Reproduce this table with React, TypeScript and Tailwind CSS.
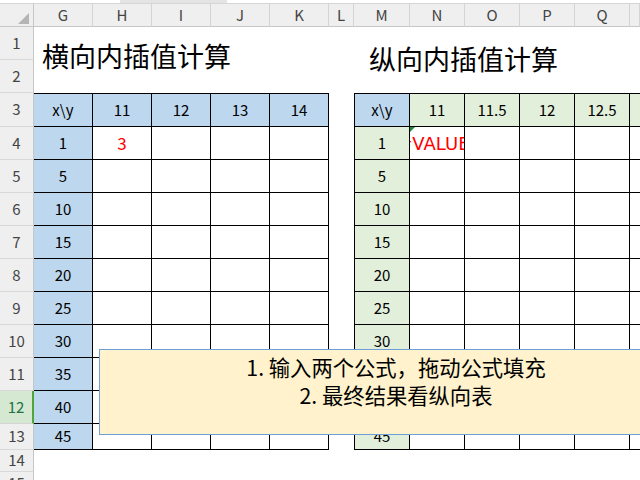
import type { ReactNode } from "react"

const LEFT_HEAD = ["x\\y", "11", "12", "13", "14"]
const RIGHT_HEAD = ["x\\y", "11", "11.5", "12", "12.5", ""]
const X_VALUES = ["1", "5", "10", "15", "20", "25", "30", "35", "40", "45"]
const COL_LETTERS = ["G", "H", "I", "J", "K", "L", "M", "N", "O", "P", "Q", ""]

function RowHead({ n, active }: { n: number; active?: boolean }) {
  return (
    <div
      className={
        active
          ? "flex items-center justify-center border-b border-r-2 border-b-[#d4d4d4] border-r-[#4fa63a] bg-[#d5e8d1] text-[15px] text-[#217346]"
          : "flex items-center justify-center border-b border-r border-b-[#d8d8d8] border-r-[#c6c6c6] bg-[#efefef] text-[15px] text-[#444]"
      }
    >
      {n}
    </div>
  )
}

function Cell({ className, children }: { className: string; children?: ReactNode }) {
  return (
    <div className={`flex items-center justify-center overflow-hidden whitespace-nowrap text-[15px] text-black ${className}`}>
      {children}
    </div>
  )
}

export default function App() {
  return (
    <div className="relative h-[480px] w-[640px] overflow-hidden bg-white font-['Noto_Sans_CJK_SC',sans-serif]">
      {/* strip left over from the formula bar */}
      <div className="flex h-[3px]">
        <div className="w-[120px] bg-white" />
        <div className="w-[107px] bg-[#e4e4e4]" />
        <div className="flex-1 bg-white" />
      </div>

      <div className="grid h-[477px] grid-cols-[34px_59px_59px_59px_59px_59px_25px_56px_55px_55px_55px_55px_1fr] grid-rows-[24px_33px_33px_34px_33px_33px_33px_33px_33px_33px_33px_33px_33px_26px_22px_1fr]">
        {/* column headers */}
        <div className="flex items-end justify-end border-t border-r border-b border-t-[#d6d6d6] border-r-[#c6c6c6] border-b-[#c6c6c6] bg-[#efefef] pr-[4px] pb-[2px]">
          <svg width="11" height="11" viewBox="0 0 11 11">
            <polygon points="11,0 11,11 0,11" fill="#b5b5b5" />
          </svg>
        </div>
        {COL_LETTERS.map((c, i) => (
          <div
            key={i}
            className="flex items-center justify-center border-t border-r border-b border-t-[#d6d6d6] border-r-[#d4d4d4] border-b-[#c6c6c6] bg-[#efefef] text-[15px] text-[#444]"
          >
            {c}
          </div>
        ))}

        {/* rows 1-2: titles */}
        <RowHead n={1} />
        <div className="col-start-2 col-span-5 row-span-2 flex items-center pb-[8px] pl-[8px] text-[27px] text-black">
          横向内插值计算
        </div>
        <div />
        <div className="col-start-8 col-span-6 row-span-2 flex items-center pb-[2px] pl-[15px] text-[27px] text-black">
          纵向内插值计算
        </div>
        <RowHead n={2} />
        <div className="col-start-7" />

        {/* row 3: table headers */}
        <RowHead n={3} />
        {LEFT_HEAD.map((h, i) => (
          <Cell key={i} className="border-t border-r border-b border-black bg-[#bdd7ee]">
            {h}
          </Cell>
        ))}
        <div />
        {RIGHT_HEAD.map((h, i) => (
          <Cell
            key={i}
            className={
              i === 0
                ? "border border-black bg-[#bdd7ee]"
                : i === 5
                  ? "border-t border-b border-black bg-[#e2efda]"
                  : "border-t border-r border-b border-black bg-[#e2efda]"
            }
          >
            {h}
          </Cell>
        ))}

        {/* rows 4-13 */}
        {X_VALUES.map((x, r) => (
          <Row key={x} n={r + 4} x={x} />
        ))}

        <RowHead n={14} />
        <div className="col-span-12" />
        <RowHead n={15} />
        <div className="col-span-12" />
      </div>

      {/* text box */}
      <div className="absolute top-[349px] left-[99px] h-[86px] w-[594px] border border-[#6d9fd6] bg-[#fff2cc] pt-[3px] text-center text-[21.3px] leading-[28px] text-black">
        <div>1. 输入两个公式，拖动公式填充</div>
        <div>2. 最终结果看纵向表</div>
      </div>
    </div>
  )
}

function Row({ n, x }: { n: number; x: string }) {
  const first = n === 4
  return (
    <>
      <RowHead n={n} active={n === 12} />
      <Cell className="border-r border-b border-black bg-[#bdd7ee]">{x}</Cell>
      <Cell className="border-r border-b border-black bg-white">
        {first && <span className="text-[17px] text-[#ff0000]">3</span>}
      </Cell>
      <Cell className="border-r border-b border-black bg-white" />
      <Cell className="border-r border-b border-black bg-white" />
      <Cell className="border-r border-b border-black bg-white" />
      <div />
      <Cell className="border-r border-b border-l border-black bg-[#e2efda]">{x}</Cell>
      <Cell className="relative border-r border-b border-black bg-white">
        {first && (
          <>
            <span className="font-['DejaVu_Sans',sans-serif] text-[18px] text-[#ff0000]">#VALUE!</span>
            <svg className="absolute top-0 left-0" width="5" height="5" viewBox="0 0 5 5">
              <polygon points="0,0 5,0 0,5" fill="#1d8a3a" />
            </svg>
          </>
        )}
      </Cell>
      <Cell className="border-r border-b border-black bg-white" />
      <Cell className="border-r border-b border-black bg-white" />
      <Cell className="border-r border-b border-black bg-white" />
      <Cell className="border-b border-black bg-white" />
    </>
  )
}
